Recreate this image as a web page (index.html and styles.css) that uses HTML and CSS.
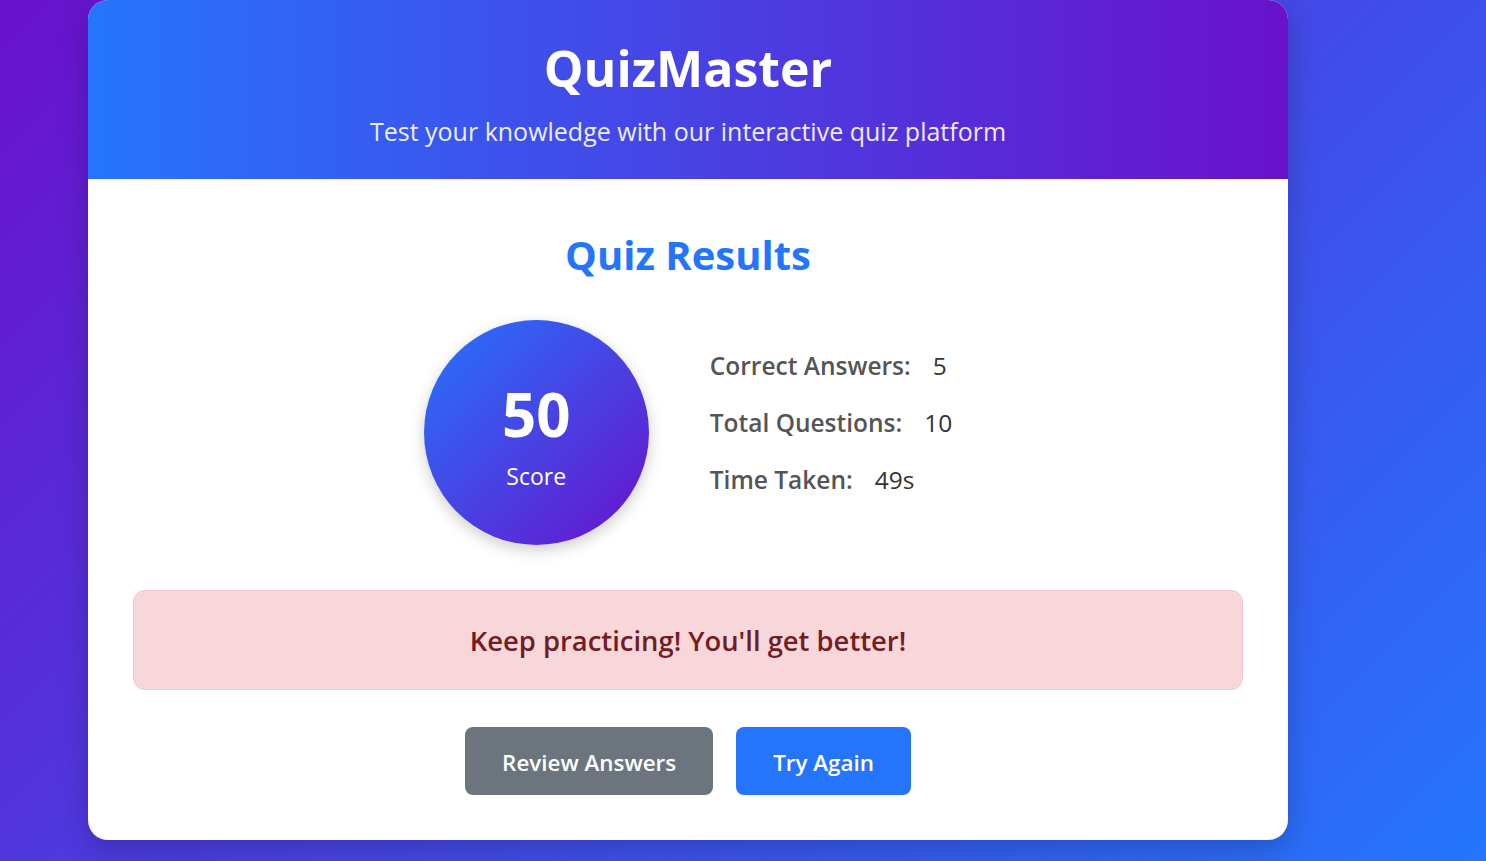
FILE: index.html
```html
<!DOCTYPE html>
<html lang="en">
<head>
<meta charset="utf-8">
<title>QuizMaster</title>
<link rel="stylesheet" href="styles.css">
</head>
<body>
<div class="page">
  <div class="card">
    <header class="card-header">
      <h1 class="title">QuizMaster</h1>
      <p class="subtitle">Test your knowledge with our interactive quiz platform</p>
    </header>
    <main class="card-body">
      <h2 class="results-title">Quiz Results</h2>
      <div class="results">
        <div class="score-circle">
          <div class="score-value">50</div>
          <div class="score-label">Score</div>
        </div>
        <div class="stats">
          <div class="stat"><span class="stat-label">Correct Answers:</span><span class="stat-value">5</span></div>
          <div class="stat"><span class="stat-label">Total Questions:</span><span class="stat-value">10</span></div>
          <div class="stat"><span class="stat-label">Time Taken:</span><span class="stat-value">49s</span></div>
        </div>
      </div>
      <div class="message">Keep practicing! You'll get better!</div>
      <div class="actions">
        <button class="btn btn-secondary">Review Answers</button>
        <button class="btn btn-primary">Try Again</button>
      </div>
    </main>
  </div>
</div>
</body>
</html>
```

FILE: styles.css
```css
* { box-sizing: border-box; }
html, body { margin: 0; padding: 0; height: 100%; }
body {
  font-family: "Open Sans", "Noto Sans", sans-serif;
  background: linear-gradient(135deg, #6a11cb 0%, #2575fc 100%);
  overflow: hidden;
}
.page {
  padding: 0 198px 0 88px;
}
.card {
  width: 1200px;
  background: #fff;
  border-radius: 20px;
  overflow: hidden;
  box-shadow: 0 10px 30px rgba(0, 0, 0, 0.2);
}
.card-header {
  height: 179px;
  background: linear-gradient(90deg, #2575fc 0%, #6a11cb 100%);
  color: #fff;
  text-align: center;
  padding-top: 38px;
}
.title {
  margin: 0;
  font-size: 50px;
  line-height: 60px;
  font-weight: 700;
}
.subtitle {
  margin: 16px 0 0;
  font-size: 25px;
  line-height: 34px;
  opacity: 0.9;
}
.card-body {
  padding: 48px 45px 45px;
}
.results-title {
  margin: 0;
  text-align: center;
  color: #2575fc;
  font-size: 40px;
  line-height: 56px;
  font-weight: 700;
}
.results {
  display: flex;
  justify-content: center;
  align-items: center;
  gap: 61px;
  margin-top: 37px;
}
.score-circle {
  width: 225px;
  height: 225px;
  border-radius: 50%;
  background: linear-gradient(135deg, #2575fc 0%, #6a11cb 100%);
  color: #fff;
  display: flex;
  flex-direction: column;
  align-items: center;
  justify-content: center;
  box-shadow: 0 5px 15px rgba(0, 0, 0, 0.2);
}
.score-value {
  font-size: 60px;
  font-weight: 700;
  line-height: 64px;
  margin-top: 8px;
}
.score-label {
  font-size: 23px;
  line-height: 30px;
  margin-top: 15px;
}
.stats {
  display: flex;
  flex-direction: column;
  gap: 27px;
  margin-top: -20px;
}
.stat {
  font-size: 24.5px;
  line-height: 30px;
  color: #333;
}
.stat-label {
  font-weight: 600;
  color: #555;
  margin-right: 22px;
}
.message {
  margin-top: 45px;
  height: 100px;
  display: flex;
  align-items: center;
  justify-content: center;
  background: #f8d7da;
  border: 1px solid #f5c6cb;
  border-radius: 12px;
  color: #721c24;
  font-size: 27.4px;
  font-weight: 600;
}
.actions {
  display: flex;
  justify-content: center;
  gap: 23px;
  margin-top: 37px;
}
.btn {
  font-family: inherit;
  border: none;
  border-radius: 8px;
  color: #fff;
  font-size: 22.4px;
  font-weight: 600;
  height: 68px;
  padding: 2px 37px 0;
  cursor: pointer;
}
.btn-secondary { background: #6c757d; }
.btn-primary { background: #2575fc; }
```
